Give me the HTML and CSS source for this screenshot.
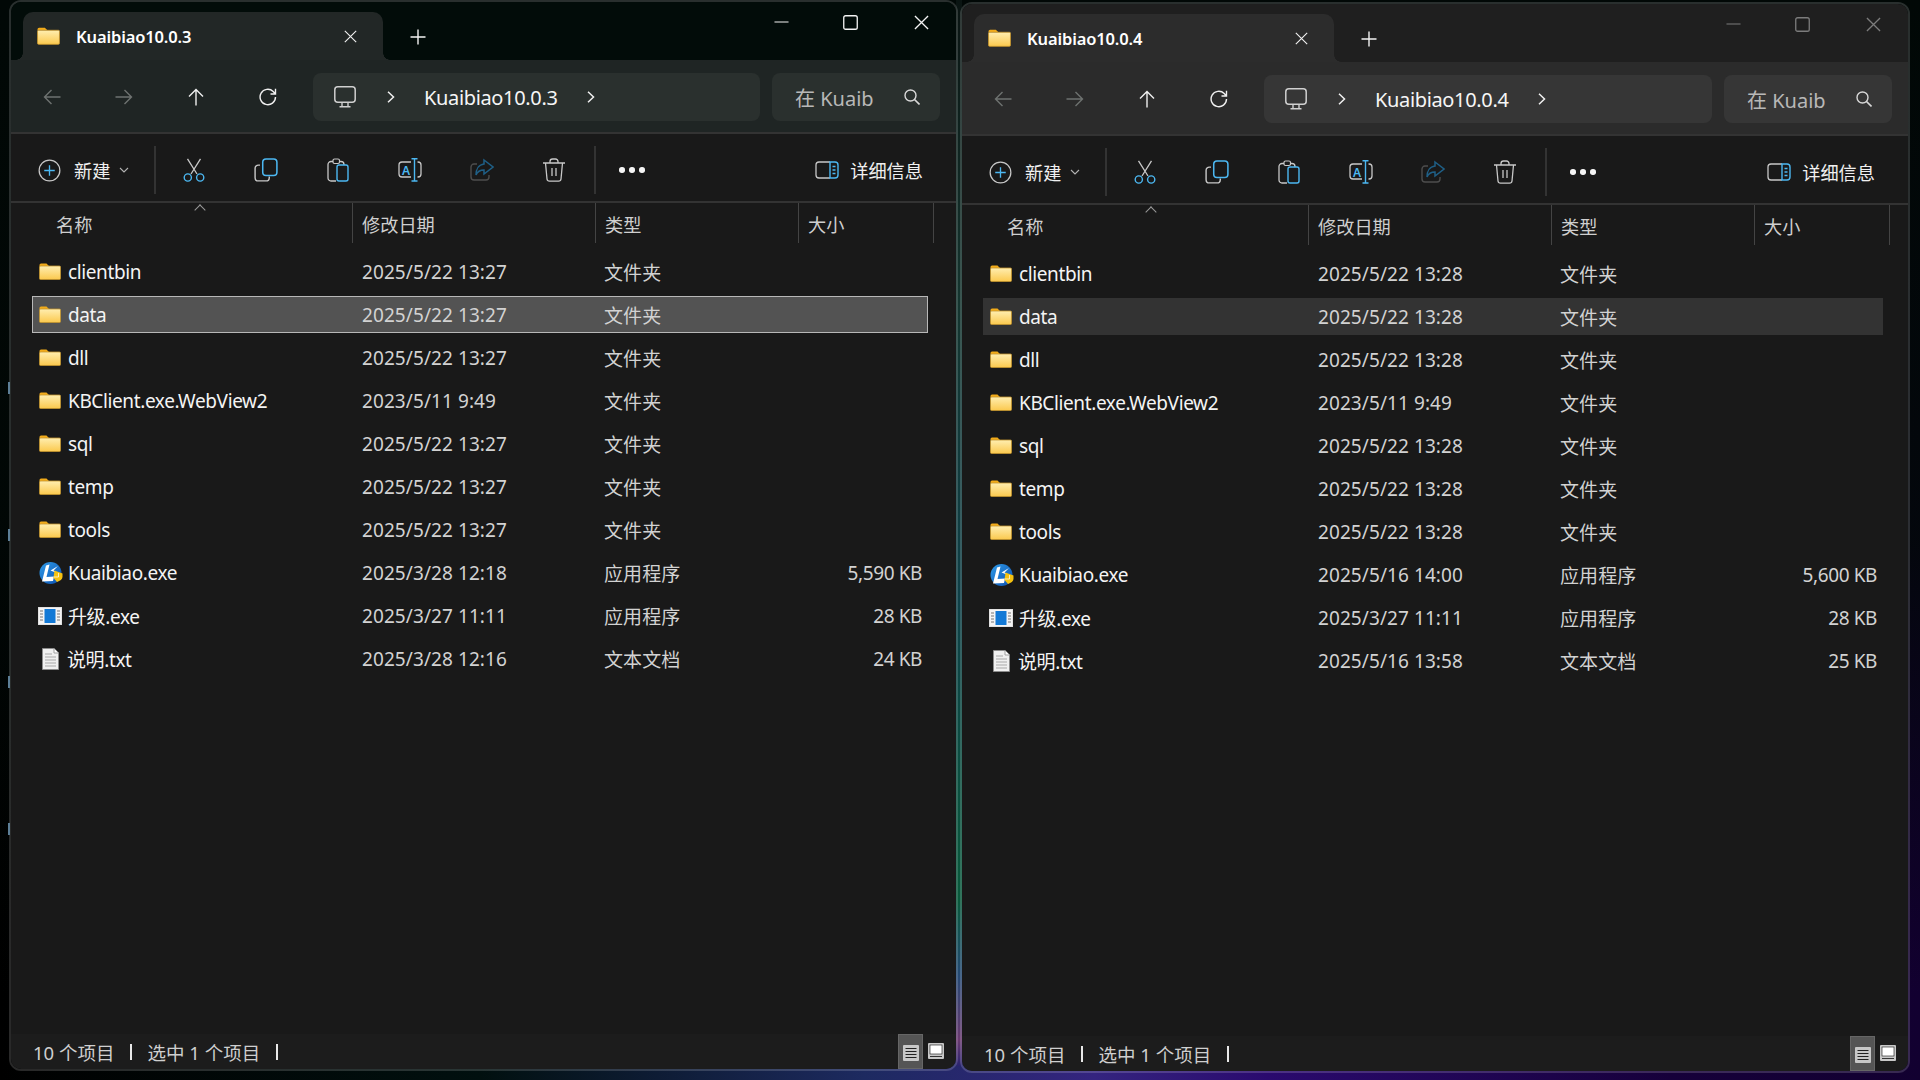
FILE: index.html
```html
<!DOCTYPE html>
<html lang="zh-CN">
<head>
<meta charset="utf-8">
<title>Kuaibiao</title>
<link rel="stylesheet" href="styles.css">
</head>
<body>
<svg class="sprites" aria-hidden="true">
  <defs>
    <linearGradient id="fg" x1="0" y1="0" x2="0" y2="1"><stop offset="0" stop-color="#ffeeb0"/><stop offset="1" stop-color="#fbc94e"/></linearGradient>
    <linearGradient id="kb" x1="0" y1="0" x2="1" y2="1"><stop offset="0" stop-color="#2f9be8"/><stop offset="1" stop-color="#0a4fb0"/></linearGradient>
    <symbol id="i-folder" viewBox="0 0 22 17"><path d="M.5 3V2A1.5 1.5 0 0 1 2 .5h5.5L10 3z" fill="#f2ab1a"/><rect x=".5" y="3" width="21" height="13.5" rx="1" fill="url(#fg)" stroke="#c4952f" stroke-width=".8"/></symbol>
    <symbol id="i-back" viewBox="0 0 18 18"><path d="M1.5 9H17.5M8.5 2 1.5 9l7 7" fill="none" stroke="currentColor" stroke-width="1.4"/></symbol>
    <symbol id="i-forward" viewBox="0 0 18 18"><path d="M.5 9H16.5M9.5 2l7 7-7 7" fill="none" stroke="currentColor" stroke-width="1.4"/></symbol>
    <symbol id="i-up" viewBox="0 0 18 18"><path d="M9 17.5V1.5M2 8.5l7-7 7 7" fill="none" stroke="currentColor" stroke-width="1.4"/></symbol>
    <symbol id="i-refresh" viewBox="0 0 18 18"><path d="M16.5 9a7.7 7.7 0 1 1-2.3-5.5L16.5 6M16.5 .8V6h-5" fill="none" stroke="currentColor" stroke-width="1.4"/></symbol>
    <symbol id="i-pc" viewBox="0 0 22 22"><rect x=".8" y=".8" width="20.4" height="15.4" rx="3" fill="none" stroke="currentColor" stroke-width="1.5"/><path d="M8 16.5V20.5M14 16.5V20.5M5.5 20.8H16.5" fill="none" stroke="currentColor" stroke-width="1.4"/></symbol>
    <symbol id="i-chev" viewBox="0 0 8 12"><path d="M1 .8 6.5 6 1 11.2" fill="none" stroke="currentColor" stroke-width="1.5"/></symbol>
    <symbol id="i-search" viewBox="0 0 16 16"><circle cx="6.5" cy="6.5" r="5.5" fill="none" stroke="currentColor" stroke-width="1.4"/><path d="M10.5 10.5 15.5 15.5" stroke="currentColor" stroke-width="1.6"/></symbol>
    <symbol id="i-x" viewBox="0 0 16 16"><path d="M1 1 15 15M15 1 1 15" stroke="currentColor" stroke-width="1.4"/></symbol>
    <symbol id="i-plus" viewBox="0 0 16 16"><path d="M8 .5V15.500M.5 8H15.500" stroke="currentColor" stroke-width="1.4"/></symbol>
    <symbol id="i-min" viewBox="0 0 16 4"><path d="M.5 2H15.500" stroke="currentColor" stroke-width="1.2"/></symbol>
    <symbol id="i-max" viewBox="0 0 16 16"><rect x=".8" y=".8" width="14.400" height="14.400" rx="2" fill="none" stroke="currentColor" stroke-width="1.4"/></symbol>
    <symbol id="i-new" viewBox="0 0 24 24"><circle cx="12" cy="12" r="10.800" fill="none" stroke="#c8c8c8" stroke-width="1.3"/><path d="M12 6.500V17.500M6.500 12H17.500" stroke="#4cb8f2" stroke-width="1.400"/></symbol>
    <symbol id="i-down" viewBox="0 0 10 6"><path d="M1 1 5 5 9 1" fill="none" stroke="currentColor" stroke-width="1.100"/></symbol>
    <symbol id="i-cut" viewBox="0 0 24 24"><path d="M5.500 .8 15 16M18.500 .8 9 16" fill="none" stroke="#c8c8c8" stroke-width="1.300"/><circle cx="5.800" cy="19.500" r="3.600" fill="none" stroke="#4cb8f2" stroke-width="1.400"/><circle cx="18.200" cy="19.500" r="3.600" fill="none" stroke="#4cb8f2" stroke-width="1.400"/></symbol>
    <symbol id="i-copy" viewBox="0 0 22 22"><path d="M5.500 6.500H4A3 3 0 0 0 1 9.500V18a3 3 0 0 0 3 3h7a3 3 0 0 0 3-3v-1" fill="none" stroke="#c8c8c8" stroke-width="1.300"/><rect x="8" y="1" width="13" height="15" rx="3" fill="none" stroke="#4cb8f2" stroke-width="1.400"/></symbol>
    <symbol id="i-paste" viewBox="0 0 22 24"><path d="M9 23H4a3 3 0 0 1-3-3V6.500a3 3 0 0 1 3-3H6M12 3.500H14a3 3 0 0 1 3 3V7" fill="none" stroke="#c8c8c8" stroke-width="1.300"/><rect x="6" y="1" width="6.500" height="4.500" rx="1.500" fill="none" stroke="#c8c8c8" stroke-width="1.200"/><rect x="10" y="7" width="11" height="16" rx="2" fill="none" stroke="#4cb8f2" stroke-width="1.400"/></symbol>
    <symbol id="i-rename" viewBox="0 0 24 24"><path d="M13 4H4A3 3 0 0 0 1 7V16a3 3 0 0 0 3 3h9M19.500 4H20a3 3 0 0 1 3 3V16a3 3 0 0 1-3 3h-.5" fill="none" stroke="#c8c8c8" stroke-width="1.300"/><path d="M16.500 .8V23M13.500 .8H19.500M13.500 23H19.500" fill="none" stroke="#4cb8f2" stroke-width="1.400"/><text x="8" y="16.500" text-anchor="middle" class="svg-a">A</text></symbol>
    <symbol id="i-share" viewBox="0 0 24 24"><path d="M7 6H4A3 3 0 0 0 1 9V19a3 3 0 0 0 3 3H16a3 3 0 0 0 3-3v-2" fill="none" stroke="#4d4d4d" stroke-width="1.400"/><path d="M14 2 23 9 14 16V12C10 12 7.500 13.500 6 17 6 11 9 6.500 14 6z" fill="none" stroke="#1f5f86" stroke-width="1.500"/></symbol>
    <symbol id="i-trash" viewBox="0 0 24 24"><path d="M1 5H23M8 5V3.500A2.500 2.500 0 0 1 10.500 1h3A2.500 2.500 0 0 1 16 3.500V5M3.500 5 5 21a2.500 2.500 0 0 0 2.500 2.200h9A2.500 2.500 0 0 0 19 21L20.500 5M10 10V18M14 10V18" fill="none" stroke="#c8c8c8" stroke-width="1.300"/></symbol>
    <symbol id="i-details" viewBox="0 0 24 18"><path d="M15 1H4A3 3 0 0 0 1 4V14a3 3 0 0 0 3 3H15" fill="none" stroke="#c8c8c8" stroke-width="1.300"/><path d="M15 1H20a3 3 0 0 1 3 3V14a3 3 0 0 1-3 3H15zM17.500 5.500H20.500M17.500 9H20.500M17.500 12.500H20.500" fill="none" stroke="#4cb8f2" stroke-width="1.400"/></symbol>
    <symbol id="i-kb" viewBox="0 0 24 24"><circle cx="11.500" cy="12" r="11" fill="url(#kb)"/><path d="M7 4.500 10.500 3.500 7.500 16 15 15.500 14 20 3 20.500z" fill="#fff"/><path d="M19 5 11.500 9.500 18 12 14.500 9.500z" fill="#fff"/><path d="M15.500 9.500 23.500 12.500V16C23.500 18 21 20 18 21L14.500 17z" fill="#f5c211"/><path d="M15 16H19.500V12" fill="none" stroke="#fff" stroke-width=".7"/></symbol>
    <symbol id="i-exe" viewBox="0 0 24 18"><rect width="24" height="18" fill="#dcdcdc"/><rect x=".8" y=".8" width="22.400" height="16.400" fill="#f4f4f4"/><rect x="6.500" y="2" width="11" height="14" fill="#1279d6"/><path d="M2 4H5M2 7H5M2 10H5M2 13H5M19 4H22M19 7H22M19 10H22M19 13H22" stroke="#777" stroke-width="1.200"/></symbol>
    <symbol id="i-txt" viewBox="0 0 17 22"><path d="M.5 .5H12L16.500 5V21.500H.5z" fill="#f0f0f0" stroke="#8c8c8c"/><path d="M12 .5V5H16.500" fill="#fff" stroke="#a0a0a0"/><path d="M3 6H10M3 9H14M3 12H14M3 15H14M3 18H14" stroke="#a8a8a8"/></symbol>
    <symbol id="i-vlist" viewBox="0 0 16 16"><rect width="16" height="16" rx="1" fill="#c8c8c8"/><path d="M2.500 3.500H13.500M2.500 6.500H13.500M2.500 9.500H13.500M2.500 12.500H13.500" stroke="#222" stroke-width="1"/></symbol>
    <symbol id="i-vlarge" viewBox="0 0 16 16"><rect width="16" height="16" rx="1" fill="#c8c8c8"/><rect x="2" y="2" width="12" height="9" fill="#fff" stroke="#111" stroke-width=".6"/><path d="M2 13.500H14" stroke="#333" stroke-width="1"/></symbol>
  </defs>
</svg>

<span class="tick t1"></span><span class="tick t2"></span><span class="tick t3"></span><span class="tick t4"></span>

<main class="desktop">
  <section class="win win-a">
    <header class="titlebar">
      <div class="tab">
        <svg class="ic-folder-tab"><use href="#i-folder"/></svg>
        <span class="tab-title">Kuaibiao10.0.3</span>
        <svg class="ic-close"><use href="#i-x"/></svg>
      </div>
      <svg class="ic-newtab"><use href="#i-plus"/></svg>
      <div class="controls">
        <span class="ctl"><svg class="ic-min"><use href="#i-min"/></svg></span>
        <span class="ctl"><svg class="ic-ctl"><use href="#i-max"/></svg></span>
        <span class="ctl"><svg class="ic-ctl"><use href="#i-x"/></svg></span>
      </div>
    </header>
    <nav class="navbar">
      <span class="navbtn dim"><svg class="ic-nav"><use href="#i-back"/></svg></span>
      <span class="navbtn dim"><svg class="ic-nav"><use href="#i-forward"/></svg></span>
      <span class="navbtn"><svg class="ic-nav"><use href="#i-up"/></svg></span>
      <span class="navbtn"><svg class="ic-nav"><use href="#i-refresh"/></svg></span>
      <div class="address">
        <svg class="ic-pc"><use href="#i-pc"/></svg>
        <svg class="ic-chev first"><use href="#i-chev"/></svg>
        <span class="crumb">Kuaibiao10.0.3</span>
        <svg class="ic-chev"><use href="#i-chev"/></svg>
      </div>
      <div class="search">
        <span class="search-text">在 Kuaib</span>
        <svg class="ic-search"><use href="#i-search"/></svg>
      </div>
    </nav>
    <div class="cmdbar">
      <svg class="ic-new"><use href="#i-new"/></svg>
      <span class="cmd-label">新建</span>
      <svg class="ic-down"><use href="#i-down"/></svg>
      <span class="cmd-sep"></span>
      <span class="cmd"><svg class="ic-cmd"><use href="#i-cut"/></svg></span>
      <span class="cmd"><svg class="ic-cmd"><use href="#i-copy"/></svg></span>
      <span class="cmd"><svg class="ic-cmd"><use href="#i-paste"/></svg></span>
      <span class="cmd"><svg class="ic-cmd"><use href="#i-rename"/></svg></span>
      <span class="cmd"><svg class="ic-cmd"><use href="#i-share"/></svg></span>
      <span class="cmd"><svg class="ic-cmd"><use href="#i-trash"/></svg></span>
      <span class="cmd-sep second"></span>
      <span class="more"><i></i><i></i><i></i></span>
      <div class="details">
        <svg class="ic-details"><use href="#i-details"/></svg>
        <span>详细信息</span>
      </div>
    </div>
    <div class="colhead">
      <div class="hc hc-name">名称<span class="sort"></span></div>
      <div class="hc hc-date">修改日期</div>
      <div class="hc hc-type">类型</div>
      <div class="hc hc-size">大小</div>
    </div>
    <div class="list">
      <div class="row"><span class="name"><svg class="ic-file"><use href="#i-folder"/></svg>clientbin</span><span>2025/5/22 13:27</span><span>文件夹</span><span class="size"></span></div>
      <div class="row selected"><span class="name"><svg class="ic-file"><use href="#i-folder"/></svg>data</span><span>2025/5/22 13:27</span><span>文件夹</span><span class="size"></span></div>
      <div class="row"><span class="name"><svg class="ic-file"><use href="#i-folder"/></svg>dll</span><span>2025/5/22 13:27</span><span>文件夹</span><span class="size"></span></div>
      <div class="row"><span class="name"><svg class="ic-file"><use href="#i-folder"/></svg>KBClient.exe.WebView2</span><span>2023/5/11 9:49</span><span>文件夹</span><span class="size"></span></div>
      <div class="row"><span class="name"><svg class="ic-file"><use href="#i-folder"/></svg>sql</span><span>2025/5/22 13:27</span><span>文件夹</span><span class="size"></span></div>
      <div class="row"><span class="name"><svg class="ic-file"><use href="#i-folder"/></svg>temp</span><span>2025/5/22 13:27</span><span>文件夹</span><span class="size"></span></div>
      <div class="row"><span class="name"><svg class="ic-file"><use href="#i-folder"/></svg>tools</span><span>2025/5/22 13:27</span><span>文件夹</span><span class="size"></span></div>
      <div class="row"><span class="name"><svg class="ic-app"><use href="#i-kb"/></svg>Kuaibiao.exe</span><span>2025/3/28 12:18</span><span>应用程序</span><span class="size">5,590 KB</span></div>
      <div class="row"><span class="name"><svg class="ic-exe"><use href="#i-exe"/></svg>升级.exe</span><span>2025/3/27 11:11</span><span>应用程序</span><span class="size">28 KB</span></div>
      <div class="row"><span class="name"><svg class="ic-txt"><use href="#i-txt"/></svg>说明.txt</span><span>2025/3/28 12:16</span><span>文本文档</span><span class="size">24 KB</span></div>
    </div>
    <footer class="status">
      <span>10 个项目</span><span class="bar"></span><span>选中 1 个项目</span><span class="bar"></span>
      <span class="viewbtn active"><svg class="ic-view"><use href="#i-vlist"/></svg></span>
      <span class="viewbtn"><svg class="ic-view up"><use href="#i-vlarge"/></svg></span>
    </footer>
  </section>

  <section class="win win-b">
    <header class="titlebar">
      <div class="tab">
        <svg class="ic-folder-tab"><use href="#i-folder"/></svg>
        <span class="tab-title">Kuaibiao10.0.4</span>
        <svg class="ic-close"><use href="#i-x"/></svg>
      </div>
      <svg class="ic-newtab"><use href="#i-plus"/></svg>
      <div class="controls">
        <span class="ctl"><svg class="ic-min"><use href="#i-min"/></svg></span>
        <span class="ctl"><svg class="ic-ctl"><use href="#i-max"/></svg></span>
        <span class="ctl"><svg class="ic-ctl"><use href="#i-x"/></svg></span>
      </div>
    </header>
    <nav class="navbar">
      <span class="navbtn dim"><svg class="ic-nav"><use href="#i-back"/></svg></span>
      <span class="navbtn dim"><svg class="ic-nav"><use href="#i-forward"/></svg></span>
      <span class="navbtn"><svg class="ic-nav"><use href="#i-up"/></svg></span>
      <span class="navbtn"><svg class="ic-nav"><use href="#i-refresh"/></svg></span>
      <div class="address">
        <svg class="ic-pc"><use href="#i-pc"/></svg>
        <svg class="ic-chev first"><use href="#i-chev"/></svg>
        <span class="crumb">Kuaibiao10.0.4</span>
        <svg class="ic-chev"><use href="#i-chev"/></svg>
      </div>
      <div class="search">
        <span class="search-text">在 Kuaib</span>
        <svg class="ic-search"><use href="#i-search"/></svg>
      </div>
    </nav>
    <div class="cmdbar">
      <svg class="ic-new"><use href="#i-new"/></svg>
      <span class="cmd-label">新建</span>
      <svg class="ic-down"><use href="#i-down"/></svg>
      <span class="cmd-sep"></span>
      <span class="cmd"><svg class="ic-cmd"><use href="#i-cut"/></svg></span>
      <span class="cmd"><svg class="ic-cmd"><use href="#i-copy"/></svg></span>
      <span class="cmd"><svg class="ic-cmd"><use href="#i-paste"/></svg></span>
      <span class="cmd"><svg class="ic-cmd"><use href="#i-rename"/></svg></span>
      <span class="cmd"><svg class="ic-cmd"><use href="#i-share"/></svg></span>
      <span class="cmd"><svg class="ic-cmd"><use href="#i-trash"/></svg></span>
      <span class="cmd-sep second"></span>
      <span class="more"><i></i><i></i><i></i></span>
      <div class="details">
        <svg class="ic-details"><use href="#i-details"/></svg>
        <span>详细信息</span>
      </div>
    </div>
    <div class="colhead">
      <div class="hc hc-name">名称<span class="sort"></span></div>
      <div class="hc hc-date">修改日期</div>
      <div class="hc hc-type">类型</div>
      <div class="hc hc-size">大小</div>
    </div>
    <div class="list">
      <div class="row"><span class="name"><svg class="ic-file"><use href="#i-folder"/></svg>clientbin</span><span>2025/5/22 13:28</span><span>文件夹</span><span class="size"></span></div>
      <div class="row selected"><span class="name"><svg class="ic-file"><use href="#i-folder"/></svg>data</span><span>2025/5/22 13:28</span><span>文件夹</span><span class="size"></span></div>
      <div class="row"><span class="name"><svg class="ic-file"><use href="#i-folder"/></svg>dll</span><span>2025/5/22 13:28</span><span>文件夹</span><span class="size"></span></div>
      <div class="row"><span class="name"><svg class="ic-file"><use href="#i-folder"/></svg>KBClient.exe.WebView2</span><span>2023/5/11 9:49</span><span>文件夹</span><span class="size"></span></div>
      <div class="row"><span class="name"><svg class="ic-file"><use href="#i-folder"/></svg>sql</span><span>2025/5/22 13:28</span><span>文件夹</span><span class="size"></span></div>
      <div class="row"><span class="name"><svg class="ic-file"><use href="#i-folder"/></svg>temp</span><span>2025/5/22 13:28</span><span>文件夹</span><span class="size"></span></div>
      <div class="row"><span class="name"><svg class="ic-file"><use href="#i-folder"/></svg>tools</span><span>2025/5/22 13:28</span><span>文件夹</span><span class="size"></span></div>
      <div class="row"><span class="name"><svg class="ic-app"><use href="#i-kb"/></svg>Kuaibiao.exe</span><span>2025/5/16 14:00</span><span>应用程序</span><span class="size">5,600 KB</span></div>
      <div class="row"><span class="name"><svg class="ic-exe"><use href="#i-exe"/></svg>升级.exe</span><span>2025/3/27 11:11</span><span>应用程序</span><span class="size">28 KB</span></div>
      <div class="row"><span class="name"><svg class="ic-txt"><use href="#i-txt"/></svg>说明.txt</span><span>2025/5/16 13:58</span><span>文本文档</span><span class="size">25 KB</span></div>
    </div>
    <footer class="status">
      <span>10 个项目</span><span class="bar"></span><span>选中 1 个项目</span><span class="bar"></span>
      <span class="viewbtn active"><svg class="ic-view"><use href="#i-vlist"/></svg></span>
      <span class="viewbtn"><svg class="ic-view up"><use href="#i-vlarge"/></svg></span>
    </footer>
  </section>
</main>
</body>
</html>
```

FILE: styles.css
```css
* { box-sizing: border-box; }
html, body { margin: 0; padding: 0; }
body {
  width: 1920px;
  height: 1080px;
  overflow: hidden;
  position: relative;
  font-family: "Noto Sans", "Noto Sans CJK SC", sans-serif;
  font-size: 18.2px;
  color: #f0f0f0;
  background:
    linear-gradient(180deg, #0a1412 0, #15352f 300px, #0f4048 600px, #0a5a3c 900px, #254a74 975px, #6a3a70 1040px, #2a2470 1066px) 956px 0 / 6px 1066px no-repeat,
    linear-gradient(180deg, #010806 0%, rgba(1, 8, 6, 0.85) 50%, rgba(1, 8, 6, 0) 92%),
    linear-gradient(90deg, #000 0, #01100f 25%, #1d2a60 45%, #34247f 57%, #2a0a6e 66%, #16003a 87%, #120030 100%);
}
.sprites { position: absolute; width: 0; height: 0; }
.svg-a { font: 600 12px "Noto Sans", sans-serif; fill: #4cb8f2; }

.tick { position: absolute; left: 8px; width: 2px; height: 12px; background: #5d7f97; }
.t1 { top: 382px; }
.t2 { top: 529px; }
.t3 { top: 676px; }
.t4 { top: 823px; }

.desktop { display: flex; gap: 2px; padding-left: 9px; align-items: flex-start; }

.win {
  --title: #020c09;
  --tab: #222726;
  --nav: #1f2524;
  --field: #2a302e;
  --ctl: #f4f4f4;
  --cols: 342px 243px 203px 135px;
  --rowcols: 329px 242px 203px 122px;
  width: 949px;
  height: 1071px;
  display: flex;
  flex-direction: column;
  border: 2px solid rgba(255, 255, 255, 0.16);
  border-radius: 12px;
  background-clip: padding-box;
  overflow: hidden;
}
.win-b {
  --title: #1f1f1f;
  --tab: #2c2c2c;
  --nav: #2b2b2b;
  --field: #363636;
  --ctl: #7c7c7c;
  --cols: 347px 243px 203px 135px;
  --rowcols: 334px 242px 203px 121px;
  width: 950px;
  margin-top: 2px;
}

/* title bar */
.titlebar { height: 58px; flex: none; display: flex; align-items: flex-start; background: var(--title); }
.tab {
  position: relative;
  width: 360px;
  height: 48px;
  margin: 10px 0 0 12px;
  padding: 0 26px 0 14px;
  display: flex;
  align-items: center;
  background: var(--tab);
  border-radius: 10px 10px 0 0;
}
.tab::before, .tab::after {
  content: "";
  position: absolute;
  bottom: 0;
  width: 7px;
  height: 7px;
}
.tab::before { left: -7px; background: radial-gradient(circle at 0 0, transparent 6.5px, var(--tab) 7px); }
.tab::after { right: -7px; background: radial-gradient(circle at 100% 0, transparent 6.5px, var(--tab) 7px); }
.ic-folder-tab { width: 23px; height: 18px; flex: none; }
.tab-title { margin-left: 16px; font-size: 16.5px; font-weight: 600; color: #fff; letter-spacing: -0.14px; }
.ic-close { width: 13px; height: 13px; margin-left: auto; color: #f0f0f0; flex: none; }
.ic-newtab { width: 16px; height: 16px; margin: 27px 0 0 27px; color: #f4f4f4; flex: none; }
.controls { margin-left: auto; display: flex; color: var(--ctl); }
.ctl { width: 70px; height: 40px; display: flex; align-items: center; justify-content: center; }
.ic-ctl { width: 15px; height: 15px; }
.ctl:nth-child(2) .ic-ctl { margin-right: 2px; }
.ic-min { width: 15px; height: 4px; }

/* nav */
.navbar { height: 72px; flex: none; display: flex; align-items: flex-start; padding: 13px 16px 0 5px; background: var(--nav); }
.navbtn { width: 72px; height: 48px; display: flex; align-items: center; justify-content: center; color: #f0f0f0; flex: none; }
.navbtn.dim { color: #6e7270; }
.ic-nav { width: 18px; height: 18px; }
.address, .search { display: flex; align-items: center; background: var(--field); border-radius: 8px; height: 48px; }
.address { flex: 1; margin-left: 9px; padding-left: 21px; }
.ic-pc { width: 22px; height: 22px; color: #d0d0d0; flex: none; }
.ic-chev { width: 8px; height: 12px; color: #f0f0f0; flex: none; margin-left: 30px; }
.ic-chev.first { margin-left: 31px; margin-right: 29px; }
.crumb { color: #f6f6f6; font-size: 20px; letter-spacing: -0.35px; }
.search { width: 168px; margin-left: 12px; padding: 0 20px 0 23px; }
.search-text { color: #b8b8b8; font-size: 20px; }
.ic-search { width: 16px; height: 16px; margin-left: auto; color: #d8d8d8; }

/* command bar */
.cmdbar {
  height: 71px;
  flex: none;
  display: flex;
  align-items: center;
  padding: 5px 33px 0 27px;
  background: #191919;
  border-top: 2px solid #333;
  border-bottom: 2px solid #333;
}
.ic-new { width: 23px; height: 23px; flex: none; }
.cmd-label { margin-left: 13px; }
.ic-down { width: 10px; height: 6px; margin-left: 9px; color: #b0b0b0; flex: none; }
.cmd-sep { width: 2px; height: 48px; margin-left: 25px; background: #333; flex: none; }
.cmd-sep.second { margin-left: 4px; }
.cmd { width: 72px; height: 48px; margin-left: 0; display: flex; align-items: center; justify-content: center; flex: none; }
.cmd-sep + .cmd { margin-left: 2px; }
.ic-cmd { width: 24px; height: 24px; }
.more { display: flex; gap: 4.500px; margin-left: 23px; }
.more i { width: 5.500px; height: 5.500px; border-radius: 50%; background: #f4f4f4; }
.details { margin-left: auto; display: flex; align-items: center; gap: 11px; }
.ic-details { width: 24px; height: 18px; flex: none; }

/* column header */
.colhead { height: 44px; flex: none; display: grid; grid-template-columns: var(--cols); background: #191919; }
.hc { position: relative; height: 40px; padding: 1px 0 0 9px; border-right: 1px solid #444; color: #cfcfcf; display: flex; align-items: center; }
.hc-name { padding-left: 45px; }
.sort {
  position: absolute;
  left: 185px;
  top: 3px;
  width: 8px;
  height: 8px;
  border-top: 1px solid #9a9a9a;
  border-left: 1px solid #9a9a9a;
  transform: rotate(45deg);
}

/* file list */
.list { flex: 1; min-height: 0; padding: 6px 0 0 21px; display: flex; flex-direction: column; gap: 6px; background: #191919; font-size: 19px; }
.row {
  width: 896px;
  height: 37px;
  flex: none;
  display: grid;
  grid-template-columns: var(--rowcols);
  align-items: center;
  border: 1px solid transparent;
  color: #d2d2d2;
  letter-spacing: 0.08px;
}
.win-b .row { width: 900px; }
.row > span:nth-child(1) { margin-left: -1px; }
.row.selected { background: #535353; border-color: #b8b8b8; }
.win-b .row.selected { background: #333; border-color: #333; }
.name { display: flex; align-items: center; color: #f4f4f4; padding-left: 7px; position: relative; letter-spacing: -0.38px; }
.ic-file { width: 22px; height: 17px; margin-right: 7px; flex: none; }
.ic-app { width: 24px; height: 24px; margin-right: 5px; flex: none; }
.ic-exe { width: 24px; height: 18px; margin: 0 6px 0 -1px; flex: none; }
.ic-txt { width: 17px; height: 22px; margin: 0 8px 0 3px; flex: none; }
.size { text-align: right; padding-right: 7px; letter-spacing: -0.4px; }

/* status bar */
.status {
  height: 35px;
  flex: none;
  display: flex;
  align-items: center;
  padding-left: 22px;
  background: #1c1c1c;
  color: #cfcfcf;
  position: relative;
  font-size: 18.500px;
}
.bar { width: 2px; height: 16px; background: #e8e8e8; margin: 0 15px 0 16px; flex: none; }
.viewbtn { width: 25px; height: 35px; flex: none; display: flex; align-items: center; justify-content: center; }
.viewbtn.active { margin-left: auto; background: #555; border: 1px solid #666; }
.viewbtn:last-child { margin: 0 7px 0 0; width: 26px; }
.ic-view { width: 16px; height: 16px; margin-top: 3px; }
.ic-view.up { margin-top: -1px; }
```
